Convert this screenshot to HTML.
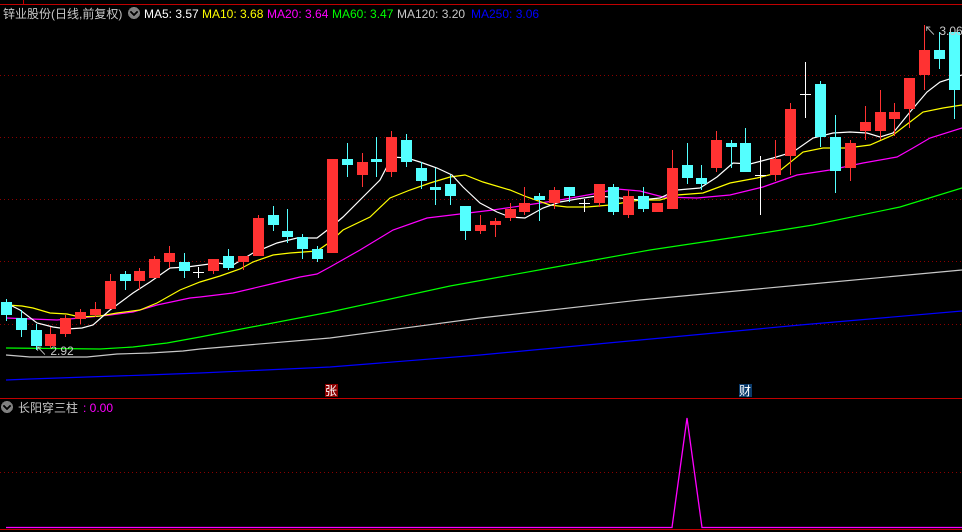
<!DOCTYPE html>
<html><head><meta charset="utf-8"><style>
html,body{margin:0;padding:0;background:#000;width:962px;height:532px;overflow:hidden}
svg{display:block}
text{font-family:"Liberation Sans","Noto Sans CJK SC",sans-serif;font-size:12px}
</style></head><body>
<svg width="962" height="532" xmlns="http://www.w3.org/2000/svg" shape-rendering="crispEdges">
<rect width="962" height="532" fill="#000"/>
<line x1="0" y1="4.5" x2="962" y2="4.5" stroke="#c00000"/>
<line x1="23.5" y1="0" x2="23.5" y2="4" stroke="#c00000"/>
<g stroke="#8b0000" stroke-dasharray="1,3">
<line x1="0" y1="75.5" x2="962" y2="75.5"/>
<line x1="0" y1="137.5" x2="962" y2="137.5"/>
<line x1="0" y1="199.5" x2="962" y2="199.5"/>
<line x1="0" y1="261.5" x2="962" y2="261.5"/>
<line x1="0" y1="324.5" x2="962" y2="324.5"/>
<line x1="0" y1="472.5" x2="962" y2="472.5"/>
</g>
<line x1="0" y1="398.5" x2="962" y2="398.5" stroke="#c00000"/>
<line x1="0" y1="529.5" x2="962" y2="529.5" stroke="#c00000"/>
<g fill="none" stroke-width="1.2" shape-rendering="auto">
<polyline stroke="#0000ff" points="6,380 30,379 87,377 147,375 200,373 330,367 480,355 640,340 800,325 962,311"/>
<polyline stroke="#c8c8c8" points="6,355 30,357 87,357 117,354 150,353 183,351 200,349 330,338 480,318 640,300 800,285 962,270"/>
<polyline stroke="#00ff00" points="6,348 100,349 133,347 167,343 200,337 330,312 450,286 550,268 650,250 750,235 813,225 900,207 962,188"/>
<polyline stroke="#ff00ff" points="6,318 57,320 80,318 110,315 133,312 157,305 190,298 200,297 233,293 267,285 300,277 317,274 330,267 360,250 393,230 427,218 460,214 493,210 527,205 560,200 593,194 617,189 640,191 663,197 697,198 730,195 763,187 797,175 830,170 863,163 897,157 913,148 930,138 962,128"/>
<polyline stroke="#ffff00" points="7,305 22,306 33,308 50,313 67,314 80,317 100,316 117,313 140,310 157,303 180,290 200,282 220,276 240,269 253,262 273,255 290,253 317,251 330,242 343,230 370,217 390,198 410,190 430,183 450,177 465,175 483,182 510,190 527,197 550,205 567,207 587,207 610,205 640,200 660,200 677,195 703,193 730,183 757,178 777,173 803,152 823,148 847,148 870,145 893,135 910,122 923,112 943,108 962,105"/>
<polyline stroke="#ffffff" points="6,303 20,310 37,323 53,327 67,329 82,328 93,325 110,310 133,293 150,282 170,268 187,267 217,263 233,265 253,253 277,243 297,238 317,238 330,228 343,217 363,197 380,180 392,157 407,158 420,162 437,168 452,175 463,187 480,203 497,212 510,217 525,218 543,208 560,202 577,199 597,196 610,197 640,200 660,198 677,190 700,188 717,177 733,163 750,164 773,158 793,152 813,138 833,133 850,132 867,133 880,137 893,133 910,112 927,92 940,82 962,75"/>
</g>
<g id="c"></g>
<text x="3" y="18" fill="#c8c8c8" font-size="13">锌业股份(日线,前复权)</text>
<circle cx="134" cy="13" r="6" fill="#808080"/>
<polyline points="130.5,11.5 134,15 137.5,11.5" fill="none" stroke="#000" stroke-width="1.5"/>
<text x="144" y="18" fill="#ffffff">MA5: 3.57</text>
<text x="202" y="18" fill="#ffff00">MA10: 3.68</text>
<text x="267" y="18" fill="#ff00ff">MA20: 3.64</text>
<text x="332" y="18" fill="#00ff00">MA60: 3.47</text>
<text x="397" y="18" fill="#c8c8c8">MA120: 3.20</text>
<text x="471" y="18" fill="#0000ff">MA250: 3.06</text>
<text x="35" y="355" fill="#c8c8c8">↖ 2.92</text>
<text x="924" y="35" fill="#c8c8c8">↖ 3.06</text>
<rect x="325" y="384" width="13" height="13" fill="#8b0000"/>
<text x="325" y="395" fill="#fff">张</text>
<rect x="739" y="384" width="13" height="13" fill="#0a3a6a"/>
<text x="739" y="395" fill="#fff">财</text>
<circle cx="7" cy="407" r="6" fill="#808080"/>
<polyline points="3.5,405.5 7,409 10.5,405.5" fill="none" stroke="#000" stroke-width="1.5"/>
<text x="18" y="412" fill="#c8c8c8" font-size="13">长阳穿三柱</text>
<text x="83" y="412" fill="#ff00ff">: 0.00</text>
<polyline points="6,527.5 672,527.5 687,418 702,527.5 962,527.5" fill="none" stroke="#ff00ff" stroke-width="1.3" shape-rendering="auto"/>
</svg>
<script>
var d=[[6,302,315,299,321,'c'],[21,318,330,310,337,'c'],[36,330,346,324,350,'c'],[50,334,346,327,348,'r'],[65,318,334,315,337,'r'],[80,312,319,309,324,'r'],[95,309,315,302,317,'r'],[110,281,309,274,309,'r'],[125,274,281,271,290,'c'],[139,271,281,268,290,'r'],[154,259,278,256,278,'r'],[169,253,262,246,268,'r'],[184,262,271,253,278,'c'],[198,272,272,267,278,'w'],[213,259,271,259,274,'r'],[228,256,268,249,270,'c'],[243,256,262,256,270,'r'],[258,218,256,215,256,'r'],[273,215,225,206,231,'c'],[287,231,237,209,243,'c'],[302,237,249,234,259,'c'],[317,249,259,246,262,'c'],[332,159,253,159,253,'r'],[347,159,165,143,177,'c'],[362,162,175,153,187,'r'],[376,159,162,137,177,'c'],[391,137,172,131,177,'r'],[406,140,162,134,167,'c'],[421,168,181,162,189,'c'],[435,187,190,168,205,'c'],[450,184,196,175,205,'c'],[465,206,231,206,240,'c'],[480,225,231,215,234,'r'],[495,221,225,218,237,'r'],[510,209,218,203,221,'r'],[524,203,212,187,215,'r'],[539,196,200,193,221,'c'],[554,190,203,187,209,'r'],[569,187,196,187,202,'c'],[584,203,203,199,212,'w'],[599,184,203,184,207,'r'],[613,187,212,184,215,'c'],[628,196,215,190,218,'r'],[643,196,209,187,212,'c'],[657,203,212,203,212,'r'],[672,168,209,150,209,'r'],[687,165,178,143,184,'c'],[701,178,184,165,190,'c'],[716,140,168,131,172,'r'],[731,143,147,140,168,'c'],[745,143,172,128,172,'c'],[760,175,175,156,215,'w'],[775,159,175,140,181,'r'],[790,109,156,103,175,'r'],[805,94,94,62,118,'w'],[820,84,137,81,147,'c'],[835,137,171,115,193,'c'],[850,143,168,140,181,'r'],[865,122,131,106,140,'r'],[880,112,131,90,140,'r'],[894,112,119,103,136,'r'],[909,78,109,78,128,'r'],[924,50,75,25,90,'r'],[939,50,59,32,69,'c'],[954,32,90,32,119,'c']];
var col={r:'#ff3232',c:'#54ffff',w:'#ffffff'},s='';
d.forEach(function(a){var x=a[0],cl=col[a[5]];
s+='<line x1="'+(x+0.5)+'" y1="'+a[3]+'" x2="'+(x+0.5)+'" y2="'+a[4]+'" stroke="'+cl+'"/>';
var h=Math.max(1,a[2]-a[1]);
s+='<rect x="'+(x-5)+'" y="'+a[1]+'" width="11" height="'+h+'" fill="'+cl+'"/>';});
document.getElementById('c').innerHTML=s;
</script>
</body></html>
